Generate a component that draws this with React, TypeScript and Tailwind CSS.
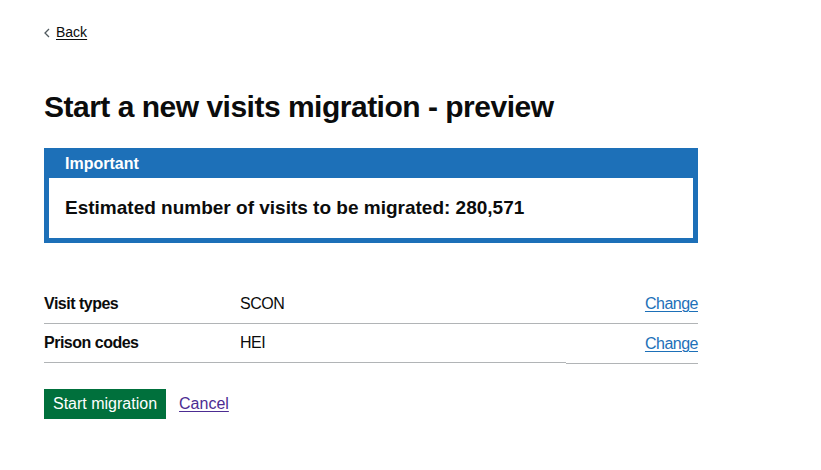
const rows = [
  { key: "Visit types", value: "SCON" },
  { key: "Prison codes", value: "HEI" },
];

export default function App() {
  return (
    <div
      className="bg-white pt-[22px] pl-[44px] text-[#0b0c0c]"
      style={{ fontFamily: '"Liberation Sans", Arial, sans-serif' }}
    >
      <div className="w-[654px]">
        <a
          href="#"
          className="flex items-center gap-[6px] text-[14px] leading-[20px] text-[#0b0c0c] underline decoration-1 underline-offset-[2px]"
        >
          <svg width="6" height="10" viewBox="0 0 6 10" className="mt-[1px]">
            <polyline
              points="5,1 1,5 5,9"
              fill="none"
              stroke="#505a5f"
              strokeWidth="1.3"
            />
          </svg>
          <span>Back</span>
        </a>

        <h1 className="mt-[47px] text-[30px] font-bold leading-[36px] tracking-[-0.5px]">
          Start a new visits migration - preview
        </h1>

        <div className="mt-[23px] border-[5px] border-[#1d70b8] bg-[#1d70b8]">
          <div className="px-[16px] pt-[1px] pb-[4px]">
            <h2 className="text-[16px] font-bold leading-[20px] text-white">
              Important
            </h2>
          </div>
          <div className="bg-white px-[16px] pt-[17px] pb-[18px]">
            <p className="text-[19px] font-bold leading-[25px]">
              Estimated number of visits to be migrated: 280,571
            </p>
          </div>
        </div>

        <dl className="mt-[42px] text-[16px] leading-[20px] tracking-[-0.5px]">
          {rows.map((row, index) => (
            <div key={row.key} className="flex items-start">
              <dt className="w-[196px] border-b border-[#b1b4b6] py-[9px] pr-[20px] font-bold">
                {row.key}
              </dt>
              <dd className="w-[326px] border-b border-[#b1b4b6] py-[9px]">
                {row.value}
              </dd>
              <dd
                className={`w-[132px] border-b border-[#b1b4b6] py-[9px] text-right ${index == rows.length - 1 ? "mt-[1px]" : ""}`}
              >
                <a
                  href="#"
                  className="text-[#1d70b8] underline decoration-1 underline-offset-[2px]"
                >
                  Change
                </a>
              </dd>
            </div>
          ))}
        </dl>

        <div className="mt-[25px] flex items-start gap-[13px]">
          <button className="h-[30px] bg-[#00703c] px-[9px] text-[16px] leading-[20px] text-white shadow-[0_2px_0_#002d18]">
            Start migration
          </button>
          <a
            href="#"
            className="mt-[5px] text-[16px] leading-[20px] text-[#4c2c92] underline decoration-1 underline-offset-[2px]"
          >
            Cancel
          </a>
        </div>
      </div>
    </div>
  );
}
